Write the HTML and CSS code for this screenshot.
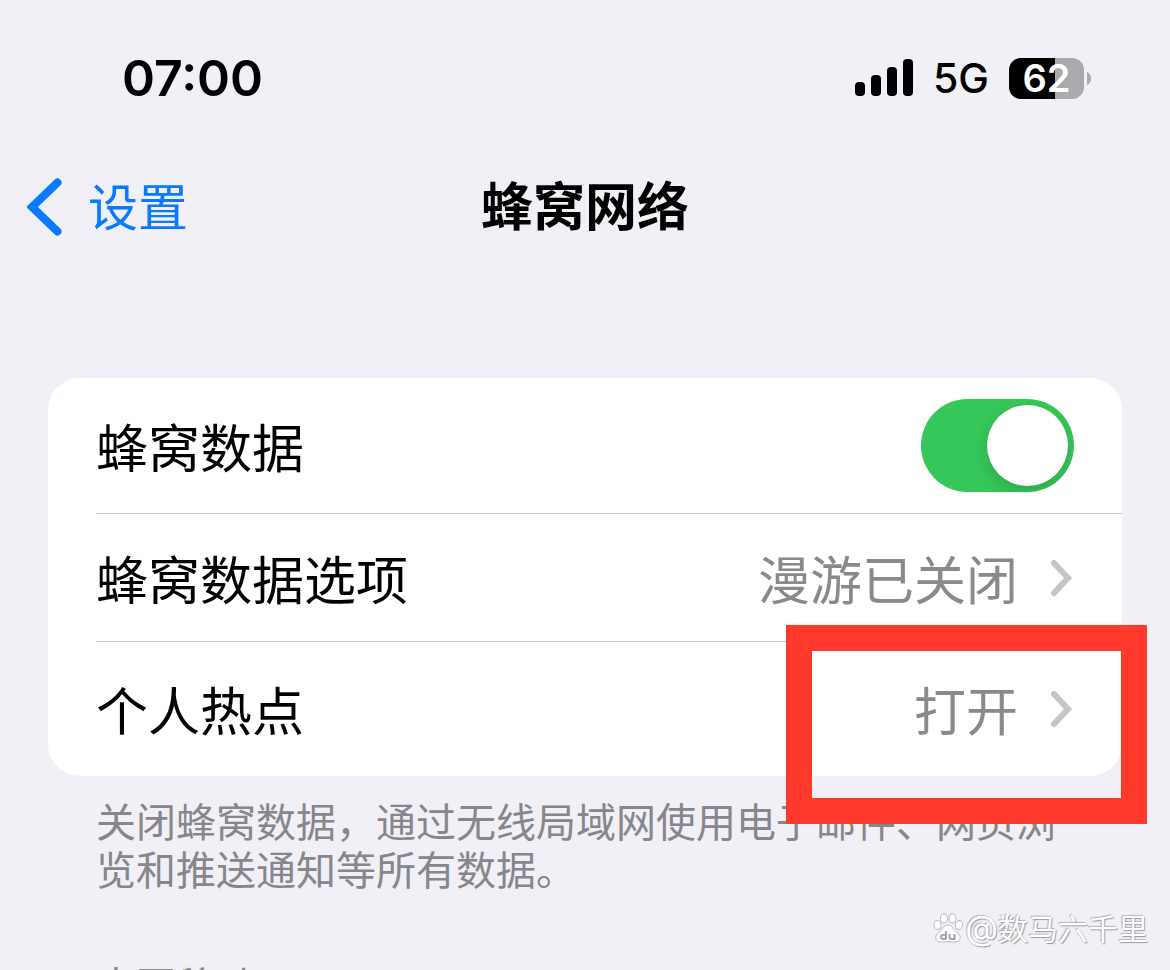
FILE: index.html
```html
<!DOCTYPE html>
<html lang="zh-CN">
<head>
    <meta charset="UTF-8">
    <meta name="viewport" content="width=device-width, initial-scale=1.0">
    <title>蜂窝网络</title>
    <link rel="stylesheet" href="styles.css">
</head>
<body>
    <div class="status-bar">
        <span class="time">07:00</span>
        <div class="status-icons">
            <svg class="signal" width="58" height="38" viewBox="0 0 58 38" aria-hidden="true">
                <rect x="0" y="23" width="10" height="14" rx="4"/>
                <rect x="16" y="16" width="10" height="21" rx="4"/>
                <rect x="32" y="8" width="10" height="29" rx="4"/>
                <rect x="48" y="0" width="10" height="37" rx="4"/>
            </svg>
            <span class="network">5G</span>
            <div class="battery">
                <span class="battery-level">62</span>
                <svg width="4" height="13" viewBox="0 0 4 13" aria-hidden="true">
                    <path d="M0 0C2.500 1 4 3.500 4 6.500S2.500 12 0 13Z" fill="#a9a9ae"/>
                </svg>
            </div>
        </div>
    </div>

    <header class="nav-bar">
        <a class="back" href="#">
            <svg width="35" height="58" viewBox="0 0 35 58" aria-hidden="true">
                <path d="M30.500 4.500L5 29L30.500 53.500" fill="none" stroke="#0a7aff" stroke-width="8" stroke-linecap="round" stroke-linejoin="miter"/>
            </svg>
            <span class="back-text">设置</span>
        </a>
        <h1 class="title">蜂窝网络</h1>
    </header>

    <main class="content">
        <div class="card">
            <div class="row">
                <label for="cellularData">蜂窝数据</label>
                <input class="switch" type="checkbox" id="cellularData" checked>
            </div>
            <a class="row row-compact" href="#">
                <span>蜂窝数据选项</span>
                <span class="value">漫游已关闭</span>
                <svg class="chevron" width="24" height="38" viewBox="0 0 24 38" aria-hidden="true">
                    <path d="M4 4L18 19L4 34"/>
                </svg>
            </a>
            <a class="row" href="#">
                <span>个人热点</span>
                <span class="value">打开</span>
                <svg class="chevron" width="24" height="38" viewBox="0 0 24 38" aria-hidden="true">
                    <path d="M4 4L18 19L4 34"/>
                </svg>
                <span class="highlight"></span>
            </a>
        </div>
        <p class="note">关闭蜂窝数据，通过无线局域网使用电子邮件、网页浏览和推送通知等所有数据。</p>
        <h2 class="section-title">中国移动</h2>
    </main>

    <div class="watermark">
        <svg width="30" height="30" viewBox="0 0 30 30" aria-hidden="true">
            <g fill="#fff" stroke="#b9b9be" stroke-width="1">
                <ellipse cx="4.500" cy="12" rx="3.500" ry="4.500" transform="rotate(-15 4.500 12)"/>
                <ellipse cx="11" cy="5.500" rx="3.500" ry="4.500"/>
                <ellipse cx="19.500" cy="5.500" rx="3.500" ry="4.500"/>
                <ellipse cx="26" cy="12" rx="3.500" ry="4.500" transform="rotate(15 26 12)"/>
                <path d="M15 12C11 12 10 16 7 18.500C4 21 2 23 3 26C4 30 9 29 15 28.500C21 29 26 30 27 26C28 23 26 21 23 18.500C20 16 19 12 15 12Z"/>
            </g>
            <path d="M13 18V26M13 22H10.500Q8 22 8 24T10.500 26H13M16.500 21V24Q16.500 26 18.500 26H21.500V21" fill="none" stroke="#a4a4aa" stroke-width="2"/>
        </svg>
        <span><span class="at">@</span>数马六千里</span>
    </div>
</body>
</html>
```

FILE: styles.css
```css
* {
    box-sizing: border-box;
}
body {
    margin: 0;
    height: 100vh;
    overflow: hidden;
    position: relative;
    background-color: #f1f0f6;
    color: #000;
    font-family: "Noto Sans CJK SC", sans-serif;
    font-size: 52px;
    line-height: 64px;
}
a {
    color: inherit;
    text-decoration: none;
}
svg {
    display: block;
    flex-shrink: 0;
}
.status-bar {
    display: flex;
    align-items: center;
    justify-content: space-between;
    height: 156px;
    padding: 0 79px 0 122px;
    font-family: Inter, sans-serif;
}
.time {
    font-size: 50px;
    font-weight: 600;
}
.status-icons {
    display: flex;
    align-items: center;
    gap: 20px;
}
.network {
    font-size: 41px;
    font-weight: 500;
}
.battery {
    display: flex;
    align-items: center;
    gap: 3px;
}
.battery-level {
    width: 75px;
    height: 41px;
    border-radius: 12px;
    background: linear-gradient(to right, #000 62%, #a9a9ae 62%);
    color: #fff;
    font-size: 38px;
    font-weight: 600;
    line-height: 41px;
    text-align: center;
}
.nav-bar {
    display: grid;
    grid-template-columns: 1fr auto 1fr;
    align-items: center;
    height: 102px;
    padding: 0 27px;
}
.back {
    display: flex;
    align-items: center;
    gap: 26px;
    color: #0a7aff;
    font-size: 50px;
}
.back-text,
.title {
    padding-bottom: 6px;
}
.title {
    margin: 0;
    font-size: 52px;
    font-weight: 700;
}
.content {
    padding: 120px 48px 0;
}
.card {
    border-radius: 32px;
    background-color: #fff;
}
.row {
    display: flex;
    align-items: center;
    position: relative;
    height: 135px;
    margin-left: 48px;
    padding-right: 48px;
}
.row-compact {
    height: 128px;
}
.row + .row {
    border-top: 1px solid #c8c8cb;
}
.value {
    margin-left: auto;
    color: #8a8a8d;
}
.chevron {
    margin-left: 32px;
    fill: none;
    stroke: #c5c5c7;
    stroke-width: 6;
    stroke-linecap: round;
}
.switch {
    appearance: none;
    width: 153px;
    height: 93px;
    margin: 0 0 0 auto;
    padding: 6px;
    border-radius: 47px;
    background-color: #35c759;
    overflow: hidden;
    cursor: pointer;
}
.switch::before {
    content: "";
    display: block;
    width: 81px;
    height: 81px;
    border-radius: 50%;
    background-color: #fff;
    box-shadow: 0 6px 16px rgba(0, 0, 0, 0.15);
}
.switch:checked::before {
    margin-left: auto;
}
.switch:not(:checked) {
    background-color: #e9e9eb;
}
/* 红框标出热点开关 */
.highlight {
    position: absolute;
    top: -17px;
    right: -25px;
    width: 361px;
    height: 199px;
    border: 26px solid #ff3a2d;
}
.note {
    margin: 20px 0 0;
    padding: 0 48px;
    color: #86868b;
    font-size: 40px;
    line-height: 48px;
}
.section-title {
    margin: 68px 0 0;
    padding: 0 48px;
    color: #86868b;
    font-size: 40px;
    font-weight: 400;
    line-height: 48px;
}
.watermark {
    position: absolute;
    right: 22px;
    bottom: 24px;
    display: flex;
    align-items: center;
    gap: 2px;
    color: #fff;
    font-size: 30px;
    line-height: 36px;
    text-shadow: 1px 1px 1px #99999f, -1px -1px 1px #b4b4ba;
}
.at {
    font-family: Inter, sans-serif;
    font-size: 34px;
}
```
